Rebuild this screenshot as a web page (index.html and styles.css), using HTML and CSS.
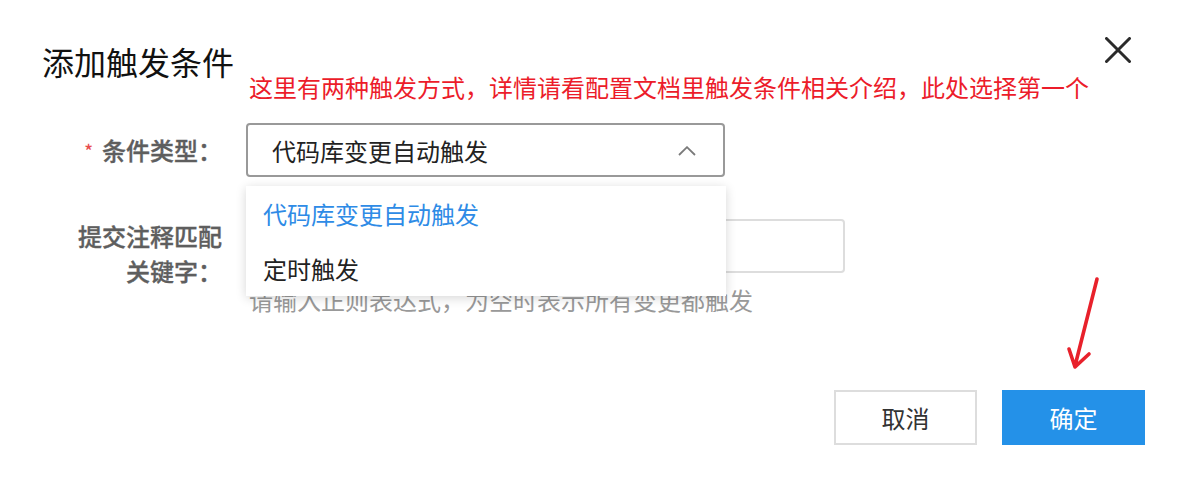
FILE: index.html
```html
<!DOCTYPE html>
<html lang="zh-CN">
<head>
<meta charset="utf-8">
<title>添加触发条件</title>
<link rel="stylesheet" href="styles.css">
</head>
<body>
<div class="dialog">
  <div class="header">
    <h1 class="title">添加触发条件</h1>
    <button class="close" aria-label="关闭">
      <svg width="26" height="26" viewBox="0 0 26 26"><path d="M1.5 1.5 L24.5 24.5 M24.5 1.5 L1.5 24.5" stroke="#2b2b2b" stroke-width="3" stroke-linecap="round" fill="none"/></svg>
    </button>
  </div>

  <div class="note">这里有两种触发方式，详情请看配置文档里触发条件相关介绍，此处选择第一个</div>

  <div class="form">
    <div class="label label-single"><span class="req">*</span>条件类型：</div>
    <div class="control">
      <div class="select-wrap">
        <div class="select">
          <span class="select-text">代码库变更自动触发</span>
          <svg class="chev" width="18" height="10" viewBox="0 0 18 10"><polyline points="1,9 9,1.2 17,9" fill="none" stroke="#7a7a7a" stroke-width="1.8"/></svg>
        </div>
        <ul class="menu">
          <li class="menu-item active">代码库变更自动触发</li>
          <li class="menu-item">定时触发</li>
        </ul>
      </div>
    </div>

    <div class="label label-multi">提交注释匹配关键字：</div>
    <div class="control">
      <div class="input"></div>
      <div class="hint">请输入正则表达式，为空时表示所有变更都触发</div>
    </div>
  </div>

  <div class="footer">
    <button class="btn btn-cancel">取消</button>
    <button class="btn btn-ok">确定</button>
  </div>

  <svg class="arrow" width="60" height="110" viewBox="1050 270 60 110">
    <path d="M1097 279 L1075 366 M1069 349 L1075 367 L1089 354" fill="none" stroke="#e8212b" stroke-width="3.6" stroke-linecap="round" stroke-linejoin="round"/>
  </svg>
</div>
</body>
</html>
```

FILE: styles.css
```css
* { box-sizing: border-box; }

html, body {
  margin: 0;
  padding: 0;
  background: #ffffff;
}

body {
  font-family: "Noto Sans CJK SC", "Noto Sans", sans-serif;
  color: #222;
}

.dialog {
  position: relative;
  width: 1190px;
  height: 488px;
  padding: 37px 45px 0 42px;
  overflow: hidden;
}

.header {
  display: flex;
  justify-content: space-between;
  align-items: flex-start;
}

.title {
  margin: 4px 0 0 0;
  font-size: 32px;
  line-height: 40px;
  font-weight: 400;
  color: #111;
}

.close {
  width: 26px;
  height: 26px;
  margin-right: 14px;
  padding: 0;
  border: 0;
  background: transparent;
  display: flex;
}

.note {
  position: absolute;
  left: 249px;
  top: 72px;
  font-size: 24px;
  line-height: 30px;
  color: #ec1c2a;
  white-space: nowrap;
}

.form {
  margin-top: 42px;
  margin-left: 36px;
  display: grid;
  grid-template-columns: 144px 1fr;
  column-gap: 24px;
  row-gap: 42px;
}

.label {
  font-size: 24px;
  color: #5e5e5e;
  font-weight: 500;
  text-align: right;
  -webkit-text-stroke: 0.35px #5e5e5e;
}

.label-single {
  line-height: 54px;
  white-space: nowrap;
}

.label-multi {
  line-height: 35px;
  margin-top: -1px;
}

.req {
  color: #e84d4d;
  -webkit-text-stroke: 0;
  font-size: 18px;
  margin-right: 9px;
  vertical-align: 2px;
}

.control {
  display: flex;
  flex-direction: column;
}

.select-wrap {
  position: relative;
  width: 479px;
}

.select {
  height: 54px;
  border: 2px solid #999;
  border-radius: 4px;
  display: flex;
  align-items: center;
  justify-content: space-between;
  padding: 0 27px 0 24px;
}

.select-text {
  font-size: 24px;
  color: #222;
}

.chev {
  margin-top: 1px;
}

.menu {
  position: absolute;
  z-index: 2;
  top: 63px;
  left: 0;
  width: 480px;
  margin: 0;
  padding: 0;
  list-style: none;
  background: #fff;
  box-shadow: 0 2px 10px rgba(0, 0, 0, 0.16);
}

.menu-item {
  height: 55px;
  line-height: 55px;
  padding-left: 17px;
  font-size: 24px;
  color: #222;
}

.menu-item.active {
  color: #2e8be6;
}

.input {
  width: 599px;
  height: 54px;
  border: 2px solid #ddd;
  border-radius: 4px;
}

.hint {
  margin-top: 8px;
  padding-left: 3px;
  font-size: 24px;
  line-height: 38px;
  color: #999;
}

.footer {
  margin-top: 71px;
  display: flex;
  justify-content: flex-end;
  gap: 25px;
}

.btn {
  width: 143px;
  height: 55px;
  font-family: "Noto Sans CJK SC", "Noto Sans", sans-serif;
  font-size: 24px;
  border-radius: 0;
  padding: 0;
}

.btn-cancel {
  background: #fff;
  border: 2px solid #ddd;
  color: #333;
}

.btn-ok {
  background: #2491e8;
  border: 0;
  color: #fff;
}

.arrow {
  position: absolute;
  left: 1050px;
  top: 270px;
}
```
